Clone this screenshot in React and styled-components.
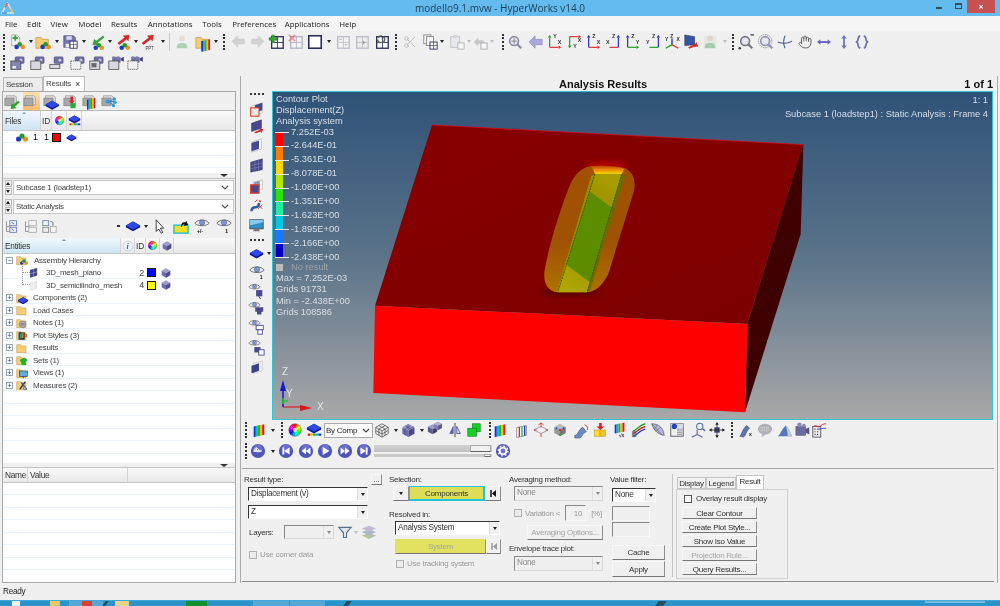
import React from 'react';
import styled, { createGlobalStyle } from 'styled-components';
import { Hand, Scissors } from 'lucide-react';

const Global = createGlobalStyle`
  html, body { margin: 0; padding: 0; background: #f0f0f0; }
  body { font-family: "Liberation Sans", Arial, sans-serif; font-size: 8px; letter-spacing: -0.25px; color: #222; }
  * { box-sizing: border-box; }
`;

const Page = styled.div`
  width: 1000px; height: 606px; overflow: hidden; display: flex; flex-direction: column;
  background: #f0f0f0; filter: blur(0.35px);
`;
const TitleBar = styled.div`
  height: 16px; background: #63bbee; display: grid; grid-template-columns: 1fr auto 1fr; align-items: center;
  font: 10px "Open Sans", sans-serif; letter-spacing: 0; color: #1f3d55;
`;
const TitleLogo = styled.svg` width: 13px; height: 13px; margin-left: 1px; `;
const WinControls = styled.div` display: flex; justify-content: flex-end; align-items: flex-start; height: 16px; padding-right: 5px; `;
const WinBtn = styled.div`
  width: ${p => p.$w}px; height: ${p => (p.$close ? 13 : 12)}px; display: flex; align-items: center; justify-content: center;
  background: ${p => (p.$close ? '#c75050' : 'transparent')}; color: ${p => (p.$close ? '#fff' : '#333')};
  font-size: 9px; font-weight: bold; margin-left: ${p => p.$ml || 0}px;
`;
const MinGlyph = styled.i` width: 6px; height: 2px; background: #3a4a58; display: block; margin-top: 4px; `;
const RestGlyph = styled.i` width: 7px; height: 6px; border: 1px solid #3a4a58; border-top-width: 2px; display: block; `;
const MenuBar = styled.div`
  height: 15px; background: #f5f5f5; display: flex; align-items: center; padding-left: 5px;
  font: 7.9px "Open Sans", sans-serif; letter-spacing: 0; color: #222;
`;
const MenuItem = styled.span` margin-right: ${p => p.$gap}px; `;
const StripBox = styled.div`
  display: flex; flex-direction: ${p => (p.$column ? 'column' : 'row')}; align-items: center; height: ${p => (p.$h ? p.$h + 'px' : 'auto')};
  flex-shrink: 0;
`;
const Slot = styled.div`
  flex: none; display: flex; align-items: center; justify-content: center;
  ${p => (p.$column ? `margin-top:${p.$off}px; height:${p.$s}px;` : `margin-left:${p.$off}px; width:${p.$s}px;`)}
`;
const GripH = styled.div` width: 2px; height: 16px; border-left: 2px dotted #333; `;
const GripV = styled.div` height: 2px; width: 14px; border-top: 2px dotted #333; `;
const SepLine = styled.div` width: 1px; height: 18px; background: #c8c8c8; `;
const DropTri = styled.div` width: 0; height: 0; border-left: 2.5px solid transparent; border-right: 2.5px solid transparent; border-top: 3px solid ${p => p.$c || '#222'}; `;
const Glyph = styled.svg` width: ${p => p.$s}px; height: ${p => p.$s}px; display: block; flex: none; overflow: visible; `;
const WithDrop = styled.div`
  position: relative; display: flex;
  &::after { content: ""; position: absolute; left: 18px; top: 6px; border-left: 2.5px solid transparent; border-right: 2.5px solid transparent; border-top: 3px solid #222; }
`;

const Main = styled.div` height: 507px; margin-top: 2px; display: flex; `;
const LeftCol = styled.div` width: 238px; padding-left: 2px; display: flex; flex-direction: column; `;
const TabRow = styled.div` height: 15px; display: flex; align-items: flex-end; padding-left: 1px; `;
const SideTab = styled.div`
  height: ${p => (p.$on ? 15 : 14)}px; width: ${p => (p.$on ? 42 : 40)}px; padding: 1px 0 0 2px; display: flex; justify-content: space-between;
  border: 1px solid #bbb; border-bottom: 0; background: ${p => (p.$on ? '#fff' : '#ececec')}; line-height: 12px;
  color: #444;
`;
const TabX = styled.span` margin-right: 4px; font-size: 9px; color: #333; `;
const SideFrame = styled.div` flex: 1; border: 1px solid #a8a8a8; display: flex; flex-direction: column; width: 234px; min-height: 0; background: #f0f0f0; `;
const IconBand = styled.div`
  height: 19px; border-bottom: 1px solid #b8b8b8;
  background: linear-gradient(#ffe0b0, #ffb870) no-repeat 20px 0 / 17px 18px;
`;
const Header = styled.div`
  height: ${p => p.$h}px; display: flex; align-items: center; flex: none; background: linear-gradient(#fafafa, #e8e8e8); border-bottom: 1px solid #c9c9c9;
  font-size: 8.3px; color: #333;
`;
const HeadCell = styled.div`
  position: relative; height: 100%; width: ${p => p.$w}px; display: flex; align-items: center; justify-content: ${p => (p.$center ? 'center' : 'flex-start')}; flex: none;
  padding-left: ${p => (p.$center ? 0 : 2)}px; border-right: 1px solid #d4d4d4;
  background: ${p => (p.$sort ? 'linear-gradient(#f0f8fd, #cde4f2)' : 'transparent')};
  ${p => p.$sort && `&::before { content: ""; position: absolute; left: 50%; top: 1px; border-left: 2px solid transparent; border-right: 2px solid transparent; border-bottom: 2px solid #7a9ab0; }`}
`;
const RuledList = styled.div`
  flex: ${p => (p.$h ? 'none' : 1)}; height: ${p => (p.$h ? p.$h + 'px' : 'auto')}; background: #fff; min-height: 0; overflow: hidden;
  background-image: repeating-linear-gradient(to bottom, transparent 0, transparent 11.5px, #e9f4fa 11.5px, #e9f4fa 12.5px);
`;
const FileRow = styled.div` height: 12.5px; display: flex; align-items: center; font-size: 9px; color: #111; `;
const Num = styled.span` width: ${p => p.$w}px; text-align: ${p => p.$a || 'left'}; flex: none; margin-left: ${p => p.$ml || 0}px; `;
const Swatch = styled.i` width: 9px; height: 9px; display: block; flex: none; border: 1px solid #111; background: ${p => p.$c}; margin: 0 ${p => p.$mr || 0}px 0 ${p => p.$ml || 0}px; `;
const Splitter = styled.div` height: ${p => p.$h}px; display: flex; justify-content: flex-end; padding: 1px 7px 0 0; background: #f0f0f0; border-bottom: 1px solid #c4c4c4; flex: none; `;
const Tri = styled.div` width: 0; height: 0; border-left: 4px solid transparent; border-right: 4px solid transparent; border-top: 3px solid #333; `;
const SelRow = styled.div` display: flex; height: 15px; margin-top: ${p => p.$mt}px; padding-left: 1px; flex: none; `;
const Spin = styled.div` width: 8px; display: flex; flex-direction: column; justify-content: space-between; align-items: center; margin-right: 1px; `;
const SpinBtn = styled.div` width: 7px; height: 7px; background: #f6f6f6; border: 1px solid #bbb; display: flex; align-items: center; justify-content: center; `;
const SpinUp = styled.i` border-left: 2.5px solid transparent; border-right: 2.5px solid transparent; border-bottom: 3px solid #111; `;
const SideSelect = styled.div` flex: 1; background: #fff; border: 1px solid #c8c8c8; margin-right: 1px; display: flex; align-items: center; justify-content: space-between; padding: 0 4px 0 2px; color: #444; `;
const Chevron = styled.svg` width: 8px; height: 5px; `;
const TreeRow = styled.div` height: 12.5px; display: flex; align-items: center; color: #444; position: relative; `;
const Expander = styled.i`
  width: 7px; height: 7px; margin-left: 3px; border: 1px solid #98a6b4; background: #fff; flex: none; display: flex; align-items: center; justify-content: center;
  font-style: normal; font-size: 7px; line-height: 5px; color: #335;
`;
const TreeLabel = styled.span` margin-left: ${p => p.$ml || 0}px; white-space: nowrap; flex: 1; `;
const TreeLink = styled.i` position: absolute; left: 19px; top: -7px; width: 8px; height: 13px; border-left: 1px dotted #999; border-bottom: 1px dotted #999; `;
const IndentBox = styled.div` width: ${p => p.$w}px; flex: none; `;
const IdCell = styled.span` width: 12px; text-align: right; flex: none; margin-right: 3px; font-size: 9px; `;

const RightCol = styled.div` width: 758px; margin-left: 2px; border-left: 1px solid #aaa; border-right: 1px solid #aaa; display: flex; flex-direction: column; `;
const RightHead = styled.div` height: 15px; display: flex; justify-content: space-between; align-items: center; padding: 0 4px 0 318px; font: bold 11px "Liberation Sans", sans-serif; letter-spacing: 0; color: #111; flex: none; `;
const ViewRow = styled.div` height: 329px; display: flex; flex: none; `;
const SideTools = styled.div` width: 31px; flex: none; `;
const Viewport = styled.div`
  position: relative; width: 721px; height: 329px; border: 1px solid #2fc7d8; flex: none;
  background: linear-gradient(#2f5278, #5a7389 50%, #a8a8a8); overflow: hidden; color: #d8dfe6; font-size: 9.3px; letter-spacing: 0; line-height: 11.2px;
`;
const Scene = styled.svg` width: 100%; height: 100%; display: block; `;
const LegendText = styled.div` position: absolute; left: 3px; top: 2px; `;
const LegendLine = styled.div` height: 11.2px; white-space: nowrap; `;
const ScaleBox = styled.div` position: absolute; left: 3px; top: 40px; width: 90px; `;
const ScaleRow = styled.div` height: 13.9px; position: relative; `;
const ScaleColor = styled.i` position: absolute; left: 0; top: 0; width: 7px; height: 13.9px; background: ${p => p.$c}; `;
const ScaleTick = styled.i` position: absolute; left: -1px; top: 0; width: 14px; height: 1px; background: #e8e8e8; `;
const ScaleLabel = styled.span` position: absolute; left: 15px; top: -5.5px; white-space: nowrap; `;
const LegendFoot = styled.div` position: absolute; left: 3px; top: 170px; `;
const NoResult = styled.div` height: 11.2px; display: flex; align-items: center; color: #9aa2a8; `;
const NoSwatch = styled.i` width: 7px; height: 7px; background: #bbb; margin: 0 8px 0 0; `;
const TopRight = styled.div` position: absolute; right: 4px; top: 1px; text-align: right; line-height: 14px; white-space: nowrap; `;

const ByComp = styled.div` width: 49px; height: 15px; background: #fff; border: 1px solid #aaa; display: flex; align-items: center; justify-content: space-between; padding: 0 2px 0 1px; white-space: nowrap; color: #222; `;
const SliderWrap = styled.div` display: flex; flex-direction: column; width: 118px; gap: 2px; `;
const SliderTop = styled.div` height: 7px; background: linear-gradient(#d4d4d4, #c0c0c0); display: flex; justify-content: flex-end; padding-right: 1px; `;
const SliderBottom = styled.div` height: 3px; background: #c9c9c9; display: flex; justify-content: flex-end; padding-right: 1px; `;
const Thumb = styled.i` width: ${p => p.$w}px; height: 100%; background: #f0f0f0; border: 1px solid #aaa; border-bottom-color: #666; display: block; `;
const ToolArea = styled.div` height: 48px; flex: none; `;
const Panel = styled.div` height: 114px; width: 752px; margin-left: 1px; border-top: 1px solid #a6a6a6; border-bottom: 1px solid #8c8c8c; display: flex; padding: 5px 0 0 2px; color: #333; flex: none; `;
const Col = styled.div` width: ${p => p.$w}px; margin-left: ${p => p.$ml || 0}px; flex: none; display: flex; flex-direction: column; align-items: flex-start; `;
const Label = styled.div`
  height: 11px; line-height: 11px; margin-top: ${p => p.$mt || 0}px; margin-left: ${p => p.$ml || 0}px; white-space: nowrap; color: ${p => (p.$off ? '#9a9a9a' : '#333')};
`;
const SpacedRow = styled.div` display: flex; width: 100%; justify-content: space-between; align-items: center; `;
const Row = styled.div` display: flex; align-items: center; margin-top: ${p => p.$mt || 0}px; margin-left: ${p => p.$ml || 0}px; `;
const Combo = styled.div`
  width: ${p => p.$w}px; height: ${p => p.$h || 14}px; margin-top: ${p => p.$mt || 0}px; margin-left: ${p => p.$ml || 0}px; display: flex; align-items: stretch; flex: none;
  background: ${p => (p.$off ? '#f0f0f0' : '#fff')}; border: 1px solid ${p => (p.$off ? '#d8d8d8' : '#fff')};
  border-top-color: ${p => (p.$off ? '#888' : '#333')}; border-left-color: ${p => (p.$off ? '#888' : '#333')};
  font-size: 8.2px; color: ${p => (p.$off ? '#888' : '#333')};
`;
const ComboText = styled.span` flex: 1; padding-left: 2px; line-height: 12px; white-space: nowrap; overflow: hidden; `;
const ComboArrow = styled.span` width: 10px; flex: none; display: flex; align-items: center; justify-content: center; background: #f0f0f0; border-left: 1px solid #ddd; `;
const RaisedBtn = styled.div`
  width: ${p => p.$w}px; height: ${p => p.$h}px; margin-top: ${p => p.$mt || 0}px; margin-left: ${p => p.$ml || 0}px; flex: none; display: flex; align-items: center; justify-content: center;
  background: ${p => p.$bg || '#f0f0f0'}; border: 1px solid ${p => p.$bg ? p.$bg : '#f8f8f8'}; border-right-color: #8e8e8e; border-bottom-color: #777;
  ${p => p.$hot && 'border: 1px solid #23c4d6; border-bottom-width: 2px; border-right-width: 2px;'}
  color: ${p => (p.$off ? '#a4a4a4' : '#333')}; white-space: nowrap;
`;
const Check = styled.i` width: 8px; height: 8px; display: block; flex: none; border: 1px solid ${p => (p.$on ? '#555' : '#b0b0b0')}; background: ${p => (p.$on ? '#fff' : '#ececec')}; margin-right: ${p => p.$mr || 3}px; margin-left: ${p => p.$ml || 0}px; `;
const Sunken = styled.div`
  width: ${p => p.$w}px; height: ${p => p.$h}px; margin-top: ${p => p.$mt || 0}px; margin-left: ${p => p.$ml || 0}px; flex: none; display: flex; align-items: center; justify-content: flex-end; padding-right: 3px;
  border: 1px solid #f8f8f8; border-top-color: #888; border-left-color: #888; color: #999;
`;
const ToEnd = styled.div` width: 6px; height: 6px; display: flex; align-items: center; `;
const VRule = styled.div` width: 1px; height: 103px; background: #c4c4c4; margin-left: 6px; flex: none; `;
const TabStrip = styled.div` display: flex; align-items: flex-end; height: 14px; padding-left: 1px; margin-top: 1px; `;
const PanelTab = styled.div`
  width: ${p => p.$w}px; height: ${p => (p.$on ? 14 : 12)}px; text-align: center; line-height: 11px; background: ${p => (p.$on ? '#fff' : '#f0f0f0')};
  border: 1px solid #c4c4c4; border-bottom: ${p => (p.$on ? 0 : '1px solid #c4c4c4')}; color: #333;
`;
const TabBody = styled.div` width: 112px; height: 90px; border: 1px solid #cfcfcf; padding: 3px 0 0 5px; `;
const Status = styled.div` height: 17px; padding-left: 3px; display: flex; align-items: center; font-size: 8.2px; color: #222; background: #f0f0f0; flex: none; `;
const Taskbar = styled.div` height: 6px; flex: none; display: flex; background: #2a93c8; border-top: 1px solid #3ea8dd; overflow: hidden; `;
const TaskBlock = styled.i` display: block; width: ${p => p.$w}px; height: 100%; margin-left: ${p => p.$ml || 0}px; background: ${p => p.$c}; flex: none; transform: ${p => (p.$skew ? 'skewX(-35deg)' : 'none')}; `;
const TaskNotes = styled.i` display: block; width: 60px; height: 2px; margin-left: auto; margin-right: 15px; background: rgba(255,255,255,.35); flex: none; `;

/* --- icon drawing parts --- */
const sectors = Array.from({ length: 16 }, (_, i) => {
  const a0 = (i / 16) * 2 * Math.PI - Math.PI / 2, a1 = ((i + 1.1) / 16) * 2 * Math.PI - Math.PI / 2;
  return { d: `M9 9L${9 + 7 * Math.cos(a0)} ${9 + 7 * Math.sin(a0)}L${9 + 7 * Math.cos(a1)} ${9 + 7 * Math.sin(a1)}Z`, c: `hsl(${(i / 16) * 360 + 15},100%,50%)` };
});
const Wheel = () => <>{sectors.map(s => <path key={s.d} d={s.d} fill={s.c} />)}<circle cx="9" cy="9" r="2.2" fill="#fff" opacity=".7" /><circle cx="9" cy="9" r="7" fill="none" stroke="#333" strokeWidth=".5" /></>;
const Model = ({ x = 0, y = 0, k = 1 }) => <g transform={`translate(${x} ${y}) scale(${k})`}><circle cx="2.6" cy="5.5" r="2.6" fill="#2438c8" /><circle cx="9.4" cy="5.5" r="2.6" fill="#e8921c" /><circle cx="6" cy="2.6" r="2.6" fill="#1f9a2e" /></g>;
const Plate = ({ x = 0, y = 0, k = 1 }) => <g transform={`translate(${x} ${y}) scale(${k})`}><path d="M9 4l8 4.5v2L9 15 1 10.500V8.500z" fill="#10108a" /><path d="M9 4l8 4.500-8 4.500-8-4.500z" fill="#2e48e6" /></g>;
const Folder = ({ c = '#f4cd74', s = '#b58e3c' }) => <path d="M1 4h6l1.500 2H15v10H1z" fill={c} stroke={s} strokeWidth=".7" />;
const GrayFolder = () => <><path d="M3 2h10l2 2v9H3z" fill="#d8d8d8" stroke="#8e8e8e" strokeWidth=".7" /><path d="M1 5h11v9H1z" fill="#a8a8a8" stroke="#777" strokeWidth=".7" /></>;
const Rainbow = ({ x = 0, y = 0, w = 2, h = 12 }) => <g transform={`translate(${x} ${y}) skewY(-12)`}>{['#e01818', '#f0c000', '#18c018', '#10b8d8', '#1830e0'].reverse().map((c, i) => <rect key={c} x={i * w} y="0" width={w} height={h} fill={c} />)}</g>;
const Cube = ({ x = 0, y = 0, k = 1, t = '#9c9ad0', l = '#6e6cac', r = '#4e4c8e' }) => <g transform={`translate(${x} ${y}) scale(${k})`}><path d="M9 2l6.500 3.500L9 9 2.500 5.500z" fill={t} /><path d="M2.500 5.500L9 9v7l-6.500-3.500z" fill={l} /><path d="M15.500 5.500L9 9v7l6.500-3.500z" fill={r} /></g>;
const Eye = ({ x = 0, y = 0, k = 1 }) => <g transform={`translate(${x} ${y}) scale(${k})`}><path d="M1 7c3-5 13-5 16 0-3 3.500-13 3.500-16 0z" fill="#eef0f4" stroke="#666" strokeWidth="1" /><circle cx="9" cy="6.200" r="3" fill="#7a96d8" stroke="#445" strokeWidth=".5" /></g>;
const Pane = ({ o = 1, c = '#2b2f58', f = '#fff' }) => <g opacity={o}><rect x="3" y="3" width="13" height="13" fill={f} stroke={c} strokeWidth="1.500" /><path d="M9.500 3v13M3 9.500h13" stroke={c} strokeWidth="1" /></g>;
const Arrow = ({ c, d = 'M2 12L12 5l-2-2 7-1-1 7-2-2L5 15z' }) => <path d={d} fill={c} stroke="#0006" strokeWidth=".4" />;
const Person = () => <g opacity=".45"><circle cx="9" cy="5" r="3.300" fill="#e0c4a8" /><path d="M3 16c0-5 2-6 6-6s6 1 6 6z" fill="#58b068" /></g>;
const Axis = ({ o, h, v, hc, vc, hl, vl, hp, vp }) => (
  <>
    <path d={`M${o[0]} ${o[1]}H${h}`} stroke={hc} strokeWidth="1.300" /><path d={`M${h} ${o[1] - 2}l${h > o[0] ? 3 : -3} 2-${h > o[0] ? 3 : -3} 2z`} fill={hc} />
    <path d={`M${o[0]} ${o[1]}V${v}`} stroke={vc} strokeWidth="1.300" /><path d={`M${o[0] - 2} ${v}l2 ${v < o[1] ? -3 : 3} 2 ${v < o[1] ? 3 : -3}z`} fill={vc} />
    <text x={hp[0]} y={hp[1]} fontSize="6" fontWeight="bold" fill="#333" fontFamily="Liberation Sans">{hl}</text>
    <text x={vp[0]} y={vp[1]} fontSize="6" fontWeight="bold" fill="#333" fontFamily="Liberation Sans">{vl}</text>
  </>
);
const Mag = ({ c = '#8f8fc4' }) => <><circle cx="8" cy="8" r="5" fill="#e6e6f4" stroke={c} strokeWidth="1.800" /><path d="M11.500 11.500L16 16" stroke={c} strokeWidth="2.400" /></>;
const Cam = ({ fill = '#d8d8e2', dash, small, low, film }) => (
  <>
    {!film && <><rect x="6" y="1" width="11" height="8" rx="1.500" fill="#6f6fa6" stroke="#44447a" strokeWidth=".5" /><circle cx="13" cy="5" r="2.300" fill="#c8c8e0" stroke="#44447a" strokeWidth=".5" /></>}
    {film && <><rect x="5" y="1" width="10" height="7" fill="#6f6fa6" /><path d="M15 3l4-2v6l-4-2z" fill="#44447a" /><circle cx="7" cy="2" r="1.800" fill="#7f7fb4" /><circle cx="12" cy="2" r="1.800" fill="#7f7fb4" /></>}
    <rect x="1" y={low ? 10 : 6} width="12" height={low ? 5 : 10} fill={fill} stroke="#444" strokeWidth=".9" strokeDasharray={dash ? '1.500 1' : 'none'} />
    {small && <rect x="3" y="8.500" width="6" height="5" fill="#666" />}
  </>
);
const Disc = ({ children }) => <><circle cx="9" cy="9" r="8" fill="#4f55b4" /><circle cx="9" cy="6.500" r="5" fill="#7d84d8" opacity=".6" />{children}</>;
const W = '#fff';

const ICONS = {
  newModel: <><path d="M3 1h6l3 3v9H3z" fill="#f2f5f8" stroke="#8b8b8b" strokeWidth=".7" /><path d="M6 1.500h2v2h2v2H8v2H6v-2H4v-2h2z" fill="#3aa63a" /><Model x={6} y={9} /></>,
  openModel: <><Folder /><Model x={6} y={9} /></>,
  saveWin: <><path d="M2 2h11l2 2v11H2z" fill="#7474b2" stroke="#3e3e78" strokeWidth=".7" /><rect x="5" y="2.500" width="6" height="4" fill="#d8d8e6" /><rect x="9" y="8" width="8" height="8" fill="#fff" stroke="#2b2f58" /><path d="M13 8v8M9 12h8" stroke="#2b2f58" strokeWidth=".7" /><rect x="4" y="11" width="4" height="4" fill="#eee" /></>,
  greenModel: <><Arrow c="#30a830" d="M16 2L8 8 6 6 4 12l7 0-2-2 8-6z" /><Model x={5} y={10} /></>,
  redModel: <><Arrow c="#e02424" d="M3 10l8-6-2-2 7-1-1 7-2-2-8 6z" /><Model x={5} y={10} /></>,
  redPpt: <><Arrow c="#e02424" d="M1 10l8-6-2-2 7-1-1 7-2-2-8 6z" /><text x="5" y="17.500" fontSize="5" fill="#444" fontFamily="Liberation Sans">PPT</text></>,
  person: <Person />,
  folderBars: <><Folder /><Rainbow x={7} y={8} /></>,
  leftGray: <path d="M1 9l7-7v4h8v6H8v4z" fill="#d2d2d2" stroke="#c4c4c4" strokeWidth=".5" />,
  rightGray: <path d="M17 9l-7-7v4H2v6h8v4z" fill="#d2d2d2" stroke="#c4c4c4" strokeWidth=".5" />,
  leftLav: <path d="M1 9l7-7v4h8v6H8v4z" fill="#a8a8dc" stroke="#8080b8" strokeWidth=".6" />,
  paneAdd: <><Pane /><path d="M3 1h3v3h3v3H6v3H3V7H0V4h3z" fill="#33a833" stroke="#1a701a" strokeWidth=".4" /></>,
  paneDel: <><Pane o={.3} /><path d="M1 1l7 7M8 1L1 8" stroke="#e46060" strokeWidth="2" opacity=".6" /></>,
  paneSquare: <rect x="2" y="2" width="14" height="14" fill="#fff" stroke="#2b2f58" strokeWidth="1.800" />,
  paneFadeA: <><Pane o={.25} /><path d="M5 6h3M11 12h3" stroke="#444" opacity=".4" /></>,
  paneFadeB: <><Pane o={.25} f="#e8e8e8" /><path d="M10 7l3 2.500-3 2.500z" fill="#666" opacity=".5" /></>,
  paneCycle: <><Pane /><circle cx="8" cy="6" r="4" fill="none" stroke="#666" strokeWidth="1.800" strokeDasharray="5 2" /></>,
  scissors: <g opacity=".45"><Scissors x={1} y={1} size={16} strokeWidth={1.500} color="#777" /></g>,
  copy: <><rect x="2" y="1" width="8" height="10" fill="#f4f4f4" stroke="#888" /><rect x="5" y="3" width="8" height="10" fill="#f4f4f4" stroke="#888" /><rect x="9" y="9" width="8" height="8" fill="#fff" stroke="#2b2f58" /><path d="M13 9v8M9 13h8" stroke="#2b2f58" strokeWidth=".7" /></>,
  paste: <g opacity=".4"><rect x="2" y="3" width="10" height="12" fill="#dde" stroke="#778" /><rect x="5" y="1" width="4" height="3" fill="#aaa" /><rect x="10" y="10" width="7" height="7" fill="#fff" stroke="#556" /></g>,
  pasteB: <g opacity=".45"><path d="M2 9l5-5v3h6v4H7v3z" fill="#999" /><rect x="10" y="10" width="7" height="7" fill="#fff" stroke="#556" /></g>,
  zoomBox: <><Mag c="#8a8a9e" /><path d="M5 8h6M8 5v6" stroke="#666" strokeWidth=".8" /></>,
  axYX: <Axis o={[3, 15]} h={13} v={4} hc="#e03030" vc="#18a018" hl="X" vl="Y" hp={[12, 11]} vp={[7, 5]} />,
  axYXdown: <Axis o={[3, 3]} h={13} v={13} hc="#e03030" vc="#18a018" hl="X" vl="Y" hp={[12, 9]} vp={[7, 16]} />,
  axZX: <Axis o={[3, 15]} h={13} v={4} hc="#e03030" vc="#2020d8" hl="X" vl="Z" hp={[12, 11]} vp={[7, 5]} />,
  axZXl: <Axis o={[15, 15]} h={5} v={4} hc="#e03030" vc="#2020d8" hl="X" vl="Z" hp={[1, 11]} vp={[8, 5]} />,
  axZY: <Axis o={[3, 15]} h={13} v={4} hc="#18a018" vc="#2020d8" hl="Y" vl="Z" hp={[12, 11]} vp={[7, 5]} />,
  axZYl: <Axis o={[15, 15]} h={5} v={4} hc="#18a018" vc="#2020d8" hl="Y" vl="Z" hp={[1, 11]} vp={[8, 5]} />,
  axIso: <><path d="M9 12V5" stroke="#2020d8" strokeWidth="1.500" /><path d="M9 12l7 4" stroke="#e03030" strokeWidth="1.500" /><path d="M9 12l-7 4" stroke="#18a018" strokeWidth="1.500" /><text x="1" y="8" fontSize="5.500" fontWeight="bold" fill="#333" fontFamily="Liberation Sans">Y</text><text x="7" y="4" fontSize="5.500" fontWeight="bold" fill="#333" fontFamily="Liberation Sans">Z</text><text x="14" y="8" fontSize="5.500" fontWeight="bold" fill="#333" fontFamily="Liberation Sans">X</text></>,
  monitorRed: <><path d="M2 1l11 2v9L2 13z" fill="#2f57a8" stroke="#223" strokeWidth=".6" /><path d="M6 15l8-4 1-2 2 5-5 1 2-1.500-7 3z" fill="#e02020" /></>,
  personGhost: <><rect x="2" y="2" width="14" height="14" fill="#ddd" opacity=".6" /><Person /></>,
  zoomMinus: <><Mag c="#75757f" /><path d="M14 1h4" stroke="#333" strokeWidth="1.300" /><circle cx="2" cy="16" r="1.500" fill="#444" /></>,
  zoomFit: <><Mag c="#8f8fb8" /><circle cx="8" cy="8" r="7.500" fill="none" stroke="#888" strokeDasharray="1.500 1" /></>,
  rotate: <><path d="M9 2c-2 5-2 10 0 14" stroke="#4a5a80" fill="none" strokeWidth="1.200" /><path d="M1 9c5 2 11 2 16-1" stroke="#4a5a80" fill="none" strokeWidth="1.200" /></>,
  hand: <Hand x={1} y={1} size={16} strokeWidth={1.500} color="#555" />,
  hArrows: <path d="M1 9l4-3v2h8V6l4 3-4 3v-2H5v2z" fill="#6a6ac4" />,
  vArrows: <path d="M9 1l3 4h-2v8h2l-3 4-3-4h2V5H6z" fill="#7272c8" />,
  braces: <path d="M7 2C3 3 6 7 3 9c3 2 0 6 4 7M11 2c4 1 1 5 4 7-3 2 0 6-4 7" fill="none" stroke="#7070b8" strokeWidth="2" />,
  camSave: <><Cam fill="#8484b8" /><rect x="3" y="12" width="4" height="3" fill="#eee" /></>,
  camWin: <Cam />,
  camLow: <Cam low />,
  camDash: <Cam dash fill="#f0f0f0" />,
  camBlack: <Cam small />,
  filmWin: <Cam film />,
  filmDash: <Cam film dash fill="#f0f0f0" />,
  fArrow: <><GrayFolder /><path d="M17 8l-6 5-2-2-1 7 7-1-2-2 6-5z" fill="#2aa82a" /></>,
  fPlain: <GrayFolder />,
  fPlate: <><GrayFolder /><Plate x={2} y={4} /></>,
  fDrop: <><GrayFolder /><path d="M9 3h3v5h2l-3.500 4L7 8h2z" fill="#e02020" /><rect x="9" y="11" width="6" height="6" fill="#20b030" /></>,
  fBars: <><GrayFolder /><Rainbow x={6} y={7} /></>,
  fNet: <><GrayFolder /><path d="M8 9l8-3M8 9l8 0M8 9l7 4" stroke="#2878c8" /><circle cx="8" cy="9" r="2.500" fill="#2f9ce0" /><circle cx="16" cy="6" r="2" fill="#2f9ce0" /><circle cx="17" cy="10" r="2" fill="#2f9ce0" /><circle cx="15" cy="14" r="2" fill="#2f9ce0" /></>,
  tree1: <><path d="M3 3v12h5M3 9h5" stroke="#8a8a8a" fill="none" /><rect x="7" y="2" width="8" height="6" fill="#eef2fa" stroke="#6a7ab0" /><rect x="7" y="10" width="8" height="6" fill="#eef2fa" stroke="#6a7ab0" /><path d="M9 4l3 2M9 12l3 2" stroke="#2a5fd0" /></>,
  tree2: <><path d="M3 3v12h5M3 9h5" stroke="#8a8a8a" fill="none" /><rect x="7" y="2" width="9" height="6" fill="#f4f4f4" stroke="#aaa" /><rect x="7" y="10" width="9" height="6" fill="#f4f4f4" stroke="#aaa" /></>,
  tree3: <><rect x="1" y="2" width="7" height="6" fill="#eef2fa" stroke="#6a7ab0" /><rect x="10" y="9" width="7" height="7" fill="#f4f4f4" stroke="#aaa" /><rect x="1" y="10" width="7" height="6" fill="#eee" stroke="#888" /><path d="M10 3c3 0 4 2 3 5" stroke="#555" fill="none" /></>,
  plate: <Plate />,
  cursor: <path d="M5 1v14l3-3 3 5 2-1-3-5h4z" fill="#fff" stroke="#222" strokeWidth="1" />,
  yellowBox: <><rect x="1" y="8" width="16" height="9" fill="#f0e020" stroke="#18c0d8" strokeWidth="1.500" /><path d="M9 10c0-4 2-6 5-5l1-2 2 5-5 1 1-2c-2 0-3 1-3 3z" fill="#111" /></>,
  eyePm: <><Eye x={0} y={-1} /><text x="3" y="17" fontSize="6.500" fontWeight="bold" fill="#222" fontFamily="Liberation Sans">+/-</text></>,
  eyeOne: <><Eye x={0} y={-1} /><text x="10" y="17" fontSize="6.500" fontWeight="bold" fill="#222" fontFamily="Liberation Sans">1</text></>,
  wheel: <Wheel />,
  plateBar: <><Plate y={-2} /><g transform="translate(2 13)">{['#e02020', '#f0c000', '#18c018', '#10b8d8', '#1830e0'].map((c, i) => <rect key={c} x={i * 3} y="0" width="3" height="2.500" fill={c} />)}</g></>,
  cube: <Cube />,
  info: <><circle cx="9" cy="9" r="7.500" fill="#eef3fa" stroke="#b8c4d8" /><text x="6.800" y="14" fontSize="12" fontWeight="bold" fontStyle="italic" fill="#3a5cc8" fontFamily="Liberation Serif">i</text></>,
  meshDark: <><path d="M2 5l11-3v12L2 17z" fill="#40408a" stroke="#223" strokeWidth=".5" /><path d="M7.500 3.500v12M2 11l11-3" stroke="#dde" strokeWidth=".7" /></>,
  meshLight: <><path d="M2 5l11-3v12L2 17z" fill="#e8e8e8" stroke="#cfcfcf" strokeWidth=".5" /><path d="M7.500 3.500v12M2 11l11-3" stroke="#fff" strokeWidth=".7" /></>,
  folderPlate: <><Folder /><Plate x={2} y={4} k={.95} /></>,
  folder: <Folder />,
  folderNotes: <><Folder /><circle cx="10" cy="11" r="5" fill="#b0b0b0" stroke="#777" /><path d="M7 10h6M7 12h6" stroke="#666" /></>,
  folderStyle: <><Folder /><rect x="4" y="5" width="9" height="11" fill="#222" /><Rainbow x={4.500} y={7} w={1.700} h={8} /><path d="M14 8l3 1-3 2 3 1" stroke="#444" fill="none" /></>,
  folderSets: <><Folder /><path d="M6 9l6-3 5 3-3 3 1 4-6 0-1-4z" fill="#16b828" stroke="#0a7016" strokeWidth=".5" /></>,
  folderViews: <><Folder /><rect x="5" y="6" width="12" height="8" fill="#5cb0e0" stroke="#335" /><path d="M11 14v3" stroke="#335" /></>,
  folderMeasures: <><Folder /><path d="M6 15l8-11" stroke="#333" strokeWidth="2" /><path d="M8 5l8 11" stroke="#3058b8" strokeWidth="2" /><circle cx="13" cy="14" r="2" fill="#ccc" stroke="#555" /></>,
  vPaneRed: <><path d="M3 5l13-4v12L3 17z" fill="#fff" stroke="#bbb" /><path d="M7 4l9-3v9l-9 3z" fill="#484890" /><rect x="2" y="7" width="10" height="10" fill="#f6e8e4" stroke="#e03020" strokeWidth="1.200" /></>,
  vPaneArrow: <><path d="M3 5l12-4v10L3 15z" fill="#484890" stroke="#223" strokeWidth=".5" /><path d="M6 16l7-3-1-2 5 1-2 5-1-2-6 2z" fill="#e02020" /></>,
  vPane: <><path d="M3 5l12-4v12L3 17z" fill="#fff" stroke="#bbb" /><path d="M3 6l9-3v10l-9 3z" fill="#484890" /></>,
  vPaneDense: <><path d="M2 5l14-4v13L2 17z" fill="#484890" stroke="#223" strokeWidth=".5" /><path d="M7 3.500v13M11.500 2.500v13M2 9l14-3M2 13l14-3" stroke="#9a9ad0" strokeWidth=".5" /></>,
  vPaneOrange: <><path d="M5 4l11-3v11L5 15z" fill="#fff" stroke="#bbb" /><path d="M6 4l7-2v9l-7 2z" fill="#9090c0" /><rect x="2" y="7" width="10" height="10" fill="#484890" stroke="#e04020" strokeWidth="1.500" /></>,
  vCurve: <><path d="M3 16c0-4 2-5 5-5s4-2 4-5" fill="none" stroke="#2a5faa" strokeWidth="3" /><path d="M7 5l3-3M11 8l5 5M16 8l-5 5" stroke="#e02020" /><circle cx="13" cy="4" r="1.200" fill="#e02020" /></>,
  monitor: <><rect x="1" y="2" width="16" height="11" fill="#2e8ec8" stroke="#444" /><path d="M1 2h16v3L1 9z" fill="#88c8ee" /><path d="M5 16h8l-1-3H6z" fill="#777" /></>,
  vEyeOne: <><Eye x={0} y={0} /><text x="12" y="17" fontSize="6" fontWeight="bold" fill="#222" fontFamily="Liberation Sans">1</text></>,
  vEyeCube: <><Eye x={-1} y={-1} k={.8} /><rect x="8" y="8" width="7" height="7" fill="#4a4a90" /><path d="M11 15l2 3" stroke="#222" /></>,
  vEyeTee: <><Eye x={-1} y={-2} k={.8} /><path d="M7 6h9v5h-2v3h-5v-3H7z" fill="#4a4a90" /></>,
  vEyeTeeO: <><Eye x={-1} y={-2} k={.8} /><rect x="8" y="6" width="8" height="5" fill="#fff" stroke="#4a4a90" /><rect x="10" y="11" width="5" height="5" fill="#fff" stroke="#4a4a90" /></>,
  vEyeTwo: <><Eye x={-1} y={-2} k={.8} /><rect x="6" y="8" width="7" height="6" fill="#4a4a90" /><rect x="11" y="11" width="6" height="6" fill="#fff" stroke="#4a4a90" /></>,
  vMesh: <><path d="M5 4l11-3v12L5 16z" fill="#eee" stroke="#ccc" /><path d="M3 7l9-3v9l-9 3z" fill="#404088" /></>,
  bars: <Rainbow x={3} y={5} w={2.400} />,
  meshCube: <g fill="none" stroke="#444" strokeWidth=".8"><path d="M9 2l7 4v7l-7 4-7-4V6z" /><path d="M2 6l7 4 7-4M9 10v7M5.500 4l7 4v7M12.500 4l-7 4v7M2 9.500l7 4 7-4" /></g>,
  solidCube: <><Cube k={1.050} /><path d="M9 2.500v6l6.500-3.500M5.500 4l7 4v7M12.500 4l-7 4v7" stroke="#2f2d60" strokeWidth=".5" fill="none" /></>,
  twoCubes: <><Cube x={-1} y={1} k={.8} l="#5a5a90" r="#404070" /><Cube x={6} y={-2} k={.7} t="#b0b0d0" l="#8080a8" r="#5a5a88" /></>,
  mirror: <><path d="M9 1v16" stroke="#333" /><path d="M7 5L3 13h4z" fill="#5060d0" stroke="#223" strokeWidth=".4" /><path d="M11 5l4 8h-4z" fill="#eef" stroke="#2a3ab0" strokeWidth=".9" /></>,
  greens: <><rect x="7" y="2" width="9" height="9" fill="#16d028" stroke="#0a7016" strokeWidth=".6" /><rect x="2" y="7" width="10" height="9" fill="#16d028" stroke="#0a7016" strokeWidth=".6" /></>,
  barsOutline: <g transform="skewY(-12)"><rect x="3" y="7" width="11" height="11" fill="#fff" stroke="#666" strokeWidth=".7" /><path d="M6 7v11" stroke="#e02020" strokeWidth="1.500" /><path d="M9 7v11" stroke="#20b030" strokeWidth="1.500" /><path d="M12 7v11" stroke="#2030d0" strokeWidth="1.500" /></g>,
  diamond: <><path d="M9 5l8 4-8 4-8-4z" fill="#f0f0f8" stroke="#555" strokeWidth=".6" /><path d="M9 1v5M6 3.500L9 1l3 2.500M9 17v-4M1 9h3M14 9h3" stroke="#e02020" strokeWidth=".9" fill="none" /></>,
  cubeWire: <><Cube t="#bbb" l="#999" r="#777" /><circle cx="9" cy="9" r="1.300" fill="#e02020" /><circle cx="5" cy="7" r="1.200" fill="#2050e0" /><circle cx="13" cy="7" r="1.200" fill="#2050e0" /><circle cx="9" cy="14" r="1.200" fill="#18b018" /></>,
  curved: <><path d="M2 15c4 0 4-7 9-9l4 5c-4 1-5 6-7 7H2z" fill="#6a8ac8" stroke="#445" strokeWidth=".6" /><path d="M13 3c3 1 4 4 3 6" stroke="#e02020" fill="none" /></>,
  dropCube: <><path d="M8 1h3v4h3l-4.500 4L5 5h3z" fill="#e02020" /><rect x="3" y="9" width="6" height="7" fill="#ffdc30" stroke="#b09020" strokeWidth=".6" /><rect x="9" y="9" width="6" height="7" fill="#ffc020" stroke="#b09020" strokeWidth=".6" /></>,
  barsVx: <><Rainbow x={3} y={3} w={2.200} h={10} /><text x="8" y="17" fontSize="5.500" fontWeight="bold" fill="#333" fontFamily="Liberation Sans">√x</text></>,
  ribbons: <><path d="M2 13c4 0 6-6 14-8" stroke="#e02020" fill="none" strokeWidth="1.600" /><path d="M2 10c4 0 6-6 14-8" stroke="#20a030" fill="none" strokeWidth="1.600" /><path d="M2 16c4 0 6-6 14-8" stroke="#2040d0" fill="none" strokeWidth="1.600" /><rect x="1" y="10" width="5" height="7" fill="#556" opacity=".6" /></>,
  dish: <><path d="M2 2c8 0 13 5 14 13-7-1-12-6-14-13z" fill="#b8b8d8" stroke="#445" strokeWidth=".7" /><path d="M2 2l12 13M8 3L5 9M12 6l-6 5" stroke="#556" strokeWidth=".6" /></>,
  infoDoc: <><rect x="2" y="2" width="14" height="14" fill="#f0f0f0" stroke="#556" /><path d="M2 2h14v4H2z" fill="#d8d8e8" /><circle cx="6" cy="5" r="3" fill="#2040c8" /><path d="M9 8h6M9 10h6M9 12h6M9 14h6" stroke="#888" /></>,
  triadMag: <><path d="M8 9v5M8 14l-6 3M8 14l6 3" stroke="#7070b0" strokeWidth="1.400" /><circle cx="11" cy="5" r="3.500" fill="#e6f0fa" stroke="#5570a0" strokeWidth="1.200" /><path d="M14 7.500L17 10" stroke="#5570a0" strokeWidth="1.600" /></>,
  crossMove: <><rect x="6" y="6" width="6" height="6" fill="#3c3c70" /><path d="M9 1v16M1 9h16" stroke="#333" /><path d="M9 0l2 3H7zM9 18l2-3H7zM0 9l3-2v4zM18 9l-3-2v4z" fill="#222" /></>,
  curveX: <><path d="M2 16c2-1 3-9 8-12l3 3c-4 3-4 9-7 10z" fill="#5a78b8" stroke="#334" strokeWidth=".5" /><text x="12" y="16" fontSize="6.500" fontWeight="bold" fill="#333" fontFamily="Liberation Sans">x</text></>,
  speech: <><ellipse cx="9" cy="8" rx="8" ry="6" fill="#aeb0b6" /><path d="M6 13l-1 4 5-3z" fill="#aeb0b6" /><path d="M4 6h10M4 8h10M4 10h10" stroke="#eee" strokeWidth=".8" strokeDasharray="1 1" /></>,
  mountain: <><path d="M1 16c3-2 4-8 9-12 3 3 5 8 7 12z" fill="#5a78b8" /><path d="M10 4c3 3 5 8 7 12h-5c0-4-1-8-2-12z" fill="#c0cce0" /></>,
  camGray: <><rect x="1" y="5" width="11" height="10" fill="#6a6a9e" stroke="#445" strokeWidth=".5" /><path d="M12 8l4-2v8l-4-2z" fill="#55558a" /><circle cx="5" cy="3" r="2.500" fill="#8a8ab8" /><circle cx="10" cy="4" r="2" fill="#8a8ab8" /></>,
  chartCalc: <><rect x="2" y="5" width="9" height="12" fill="#e8e8e8" stroke="#556" /><path d="M4 8h1M7 8h1M4 11h1M7 11h1M4 14h1M7 14h1" stroke="#333" strokeWidth="1.300" /><path d="M3 5c3-3 5 2 7 0s4-3 7-3" stroke="#e02030" fill="none" /><path d="M8 8c3 0 4-1 9-1" stroke="#2040d0" fill="none" /></>,
  discUp: <Disc><path d="M4 9h9M7 6V9" stroke={W} strokeWidth="1.800" fill="none" /><path d="M7 5l-3 3M7 5l3 3" stroke={W} /></Disc>,
  discFirst: <Disc><rect x="5" y="5" width="2" height="8" fill={W} /><path d="M13 5v8L7 9z" fill={W} /></Disc>,
  discPrev: <Disc><path d="M9 5v8L4 9zM14 5v8L9 9z" fill={W} /></Disc>,
  discPlay: <Disc><path d="M6.500 4.500v9L14 9z" fill={W} /></Disc>,
  discNext: <Disc><path d="M4 5v8l5-4zM9 5v8l5-4z" fill={W} /></Disc>,
  discLast: <Disc><rect x="11" y="5" width="2" height="8" fill={W} /><path d="M5 5v8l6-4z" fill={W} /></Disc>,
  discGear: <Disc><circle cx="9" cy="9" r="3.800" fill="none" stroke={W} strokeWidth="2.200" /><circle cx="9" cy="9" r="5.500" fill="none" stroke={W} strokeWidth="1.400" strokeDasharray="1.800 2.500" /></Disc>,
};

const Icon = ({ k, s = 16 }) => <Glyph $s={s} viewBox="0 0 18 18">{ICONS[k]}</Glyph>;

const SIZES = { grip: 2, drop: 5, fade: 5, gripV: 14, sep: 1 };
function Strip({ items, origin = 0, column, h, size: dflt = 16 }) {
  let edge = origin;
  return (
    <StripBox $column={column} $h={h}>
      {items.map((it, i) => {
        const [kind, c, size, node] = it;
        const s = size ?? SIZES[kind] ?? dflt;
        const off = Math.round(c - s / 2 - edge);
        edge += off + s;
        let body;
        if (node) body = node;
        else if (kind === 'grip') body = <GripH />;
        else if (kind === 'gripV') body = <GripV />;
        else if (kind === 'drop') body = <DropTri />;
        else if (kind === 'fade') body = <DropTri $c="#bbb" />;
        else if (kind === 'sep') body = <SepLine />;
        else body = <Icon k={kind} s={s} />;
        return <Slot key={i} $column={column} $off={off} $s={s}>{body}</Slot>;
      })}
    </StripBox>
  );
}

const TB1 = [
  ['grip', 4], ['newModel', 17], ['drop', 30], ['openModel', 43], ['drop', 56], ['saveWin', 70], ['drop', 83], ['greenModel', 97], ['drop', 109], ['redModel', 123], ['drop', 135], ['redPpt', 149], ['drop', 162], ['sep', 169],
  ['person', 182], ['folderBars', 203], ['drop', 215], ['grip', 224], ['leftGray', 238, 15], ['rightGray', 257, 15], ['paneAdd', 277], ['paneDel', 296], ['paneSquare', 315], ['drop', 328], ['paneFadeA', 343], ['paneFadeB', 362], ['paneCycle', 382], ['grip', 396],
  ['scissors', 410], ['copy', 430], ['drop', 441], ['paste', 457], ['fade', 468], ['pasteB', 480], ['fade', 491], ['grip', 503], ['zoomBox', 515], ['leftLav', 536],
  ['axYX', 555], ['axYXdown', 575], ['axZX', 594], ['axZXl', 613], ['axZY', 633], ['axZYl', 653], ['axIso', 672], ['monitorRed', 691], ['personGhost', 710], ['fade', 724], ['grip', 733],
  ['zoomMinus', 746], ['zoomFit', 766], ['rotate', 785], ['hand', 805], ['hArrows', 824], ['vArrows', 844], ['braces', 862],
];
const TB2 = [['grip', 4], ['camSave', 17], ['camWin', 37], ['camLow', 56], ['camDash', 77], ['camBlack', 96], ['filmWin', 115], ['filmDash', 134]];
const TOP_ICONS = [['fArrow', 8], ['fPlain', 27], ['fPlate', 47], ['fDrop', 67], ['fBars', 86], ['fNet', 105]];
const MID_ICONS = [['tree1', 8, 15], ['tree2', 27, 15], ['tree3', 46, 15], ['gripV', 114, 1], ['plate', 130], ['drop', 142], ['cursor', 156, 15], ['yellowBox', 178], ['eyePm', 199], ['eyeOne', 221]];
const VTOOLS = [
  ['gripV', 3], ['vPaneRed', 18, 15], ['vPaneArrow', 35, 15], ['vPane', 54, 15], ['vPaneDense', 74, 15], ['vPaneOrange', 95, 15], ['vCurve', 114, 15], ['monitor', 134, 15], ['gripV', 149],
  ['plateDrop', 162, 13, <WithDrop><Icon k="plate" s={15} /></WithDrop>],
  ['vEyeOne', 181, 16], ['vEyeCube', 200, 16], ['vEyeTee', 219, 16], ['vEyeTeeO', 237, 16], ['vEyeTwo', 257, 16], ['vMesh', 276, 15],
];
const BT1 = [
  ['grip', 6], ['bars', 19], ['drop', 32], ['grip', 42], ['wheel', 55], ['plateBar', 74], ['combo', 108.5, 49, <ByComp><span>By Comp</span><Chevron viewBox="0 0 8 5"><path d="M1 1l3 3 3-3" fill="none" stroke="#444" strokeWidth="1.200" /></Chevron></ByComp>],
  ['meshCube', 142], ['drop', 155], ['solidCube', 168], ['drop', 181], ['twoCubes', 195], ['mirror', 215], ['greens', 234], ['grip', 250], ['bars', 260], ['barsOutline', 282], ['diamond', 301], ['cubeWire', 320], ['curved', 341], ['dropCube', 360], ['barsVx', 380], ['ribbons', 399], ['dish', 418], ['infoDoc', 437], ['triadMag', 458], ['crossMove', 477], ['grip', 492], ['curveX', 506], ['speech', 525], ['mountain', 545], ['camGray', 563], ['chartCalc', 579],
];
const BT2 = [
  ['grip', 6], ['discUp', 18], ['drop', 32], ['discFirst', 46], ['discPrev', 66], ['discPlay', 85], ['discNext', 105], ['discLast', 124],
  ['slider', 193, 118, <SliderWrap><SliderTop><Thumb $w={21} /></SliderTop><SliderBottom><Thumb $w={7} /></SliderBottom></SliderWrap>], ['discGear', 263],
];

const LEGEND = ['7.252E-03', '-2.644E-01', '-5.361E-01', '-8.078E-01', '-1.080E+00', '-1.351E+00', '-1.623E+00', '-1.895E+00', '-2.166E+00', '-2.438E+00'];
const LEGEND_C = ['#ff0000', '#ff7a00', '#ffd800', '#b4e800', '#28e400', '#20f0a0', '#00c8e0', '#1878ff', '#0000c4'];
const MENUS = [['File', 9.5], ['Edit', 9.5], ['View', 10.5], ['Model', 9.5], ['Results', 10.5], ['Annotations', 9.5], ['Tools', 10.5], ['Preferences', 8.5], ['Applications', 9.5], ['Help', 0]];
const TREE = [
  ['folderPlate', 'Components (2)'], ['folder', 'Load Cases'], ['folderNotes', 'Notes (1)'], ['folderStyle', 'Plot Styles (3)'], ['folder', 'Results'], ['folderSets', 'Sets  (1)'], ['folderViews', 'Views (1)'], ['folderMeasures', 'Measures (2)'],
];

function ComboBox({ text, w, h, mt, ml, off }) {
  return (
    <Combo $w={w} $h={h} $mt={mt} $ml={ml} $off={off}>
      <ComboText>{text}</ComboText>
      <ComboArrow><DropTri $c={off ? '#888' : '#222'} /></ComboArrow>
    </Combo>
  );
}

const ToFirst = ({ c = '#111' }) => <ToEnd><Glyph $s={7} viewBox="0 0 7 7"><path d="M1 0v7" stroke={c} strokeWidth="1.500" /><path d="M6 0v7L2 3.500z" fill={c} /></Glyph></ToEnd>;
const SelChevron = () => <Chevron viewBox="0 0 8 5"><path d="M1 1l3 3 3-3" fill="none" stroke="#555" strokeWidth="1.200" /></Chevron>;

function ModelScene() {
  return (
    <Scene viewBox="273 93 719 327" preserveAspectRatio="none">
      <defs>
        <linearGradient id="topFace" x1="0" y1="0" x2="1" y2="1"><stop offset="0" stopColor="#880000" /><stop offset="1" stopColor="#7c0000" /></linearGradient>
        <linearGradient id="strip" x1="0.7" y1="0" x2="0.3" y2="1">
          <stop offset="0" stopColor="#a89c00" /><stop offset=".19" stopColor="#a09400" /><stop offset=".2" stopColor="#5c8c00" /><stop offset=".85" stopColor="#5c8c00" /><stop offset=".86" stopColor="#a8a000" /><stop offset="1" stopColor="#aca400" />
        </linearGradient>
        <linearGradient id="blob" x1="0" y1="0" x2="0" y2="1"><stop offset="0" stopColor="#a05000" /><stop offset=".6" stopColor="#a05204" /><stop offset="1" stopColor="#ae7200" /></linearGradient>
        <linearGradient id="cap" x1="0" y1="0" x2="0" y2="1"><stop offset="0" stopColor="#c04800" /><stop offset=".5" stopColor="#f09000" /><stop offset="1" stopColor="#f0e000" /></linearGradient>
        <filter id="soft" x="-40%" y="-60%" width="180%" height="220%"><feGaussianBlur stdDeviation="8" /></filter>
      </defs>
      <g transform="translate(360 110) scale(.33333)">
        <path d="M216 48L1330 107 1162 645 45 590z" fill="url(#topFace)" />
        <path d="M216 48L1330 107" stroke="#f00000" strokeWidth="2" fill="none" />
        <path d="M1330 107L1322 375 1155 910 1162 645z" fill="#3e0000" />
        <path d="M45 590L1162 645 1155 910 40 852z" fill="#ff0000" />
        <ellipse cx="740" cy="170" rx="60" ry="12" fill="#b80000" filter="url(#soft)" />
        <ellipse cx="630" cy="550" rx="90" ry="10" fill="#560000" filter="url(#soft)" />
        <path d="M690 172C720 168 780 172 795 178 820 190 828 215 822 245L745 495C725 535 700 550 680 550L595 550C565 548 550 525 553 490 560 440 590 330 625 240 640 200 660 178 690 172Z" fill="url(#blob)" />
        <path d="M695 172C720 170 775 172 792 180L785 196 705 196Z" fill="url(#cap)" />
        <path d="M694 200L704 196 595 540 590 550Z" fill="#8d9400" />
        <path d="M785 196L796 200 690 545 680 550Z" fill="#6a6c00" />
        <path d="M705 195L785 195 680 550 592 550Z" fill="url(#strip)" />
        <path d="M705 195L594 548M785 195L682 548" stroke="#4a5c00" strokeWidth="3" strokeDasharray="6 3" fill="none" />
      </g>
      <path d="M283 408V385" stroke="#1616d8" strokeWidth="1.500" />
      <path d="M280 392l3-11 3 11z" fill="#1616d8" />
      <path d="M283 408H306" stroke="#d82020" strokeWidth="1.200" />
      <path d="M300 406l12 3-12 3z" fill="#d81818" />
      <path d="M283 402h5M283 399v6" stroke="#10d020" strokeWidth="1.400" />
      <text x="282" y="376" fontSize="10" fill="#e6e6e6" fontFamily="Liberation Sans">Z</text>
      <text x="286" y="398" fontSize="10" fill="#e6e6e6" fontFamily="Liberation Sans">Y</text>
      <text x="317" y="411" fontSize="10" fill="#e6e6e6" fontFamily="Liberation Sans">X</text>
    </Scene>
  );
}

export default function App() {
  return (
    <Page>
      <Global />
      <TitleBar>
        <TitleLogo viewBox="0 0 13 13"><path d="M6.500 1L12 11H1z" fill="none" stroke="#dfeaf5" strokeWidth="1.500" /><path d="M6.500 1L4 5.500" stroke="#e05050" strokeWidth="1.500" /><path d="M1 11h5" stroke="#3a8ed8" strokeWidth="1.500" /><path d="M12 11L9.500 6.500" stroke="#e8c040" strokeWidth="1.500" /></TitleLogo>
        <span>modello9.1.mvw - HyperWorks v14.0</span>
        <WinControls>
          <WinBtn $w={14}><MinGlyph /></WinBtn>
          <WinBtn $w={14} $ml={5}><RestGlyph /></WinBtn>
          <WinBtn $w={28} $ml={2} $close>×</WinBtn>
        </WinControls>
      </TitleBar>
      <MenuBar>{MENUS.map(([m, g]) => <MenuItem key={m} $gap={g}>{m}</MenuItem>)}</MenuBar>
      <Strip items={TB1} h={21} />
      <Strip items={TB2} h={22} size={15} />
      <Main>
        <LeftCol>
          <TabRow>
            <SideTab>Session</SideTab>
            <SideTab $on>Results<TabX>×</TabX></SideTab>
          </TabRow>
          <SideFrame>
            <IconBand>
              <Strip items={TOP_ICONS} h={18} size={15} />
            </IconBand>
            <Header $h={20}>
              <HeadCell $w={38} $sort>Files</HeadCell>
              <HeadCell $w={11} $center>ID</HeadCell>
              <HeadCell $w={15} $center><Icon k="wheel" s={11} /></HeadCell>
              <HeadCell $w={15} $center><Icon k="plateBar" s={13} /></HeadCell>
            </Header>
            <RuledList $h={42}>
              <FileRow>
                <IndentBox $w={13} /><Glyph $s={12} viewBox="0 0 12 9"><Model y={1} /></Glyph>
                <Num $w={8} $ml={5}>1</Num><Num $w={6} $ml={3}>1</Num><Swatch $c="#ff0000" $ml={2} $mr={5} />
                <Glyph $s={11} viewBox="0 0 18 18"><Plate /></Glyph>
              </FileRow>
            </RuledList>
            <Splitter $h={6}><Tri /></Splitter>
            <SelRow $mt={1}>
              <Spin><SpinBtn><SpinUp /></SpinBtn><SpinBtn><DropTri /></SpinBtn></Spin>
              <SideSelect>Subcase 1 (loadstep1)<SelChevron /></SideSelect>
            </SelRow>
            <SelRow $mt={4}>
              <Spin><SpinBtn><SpinUp /></SpinBtn><SpinBtn><DropTri /></SpinBtn></Spin>
              <SideSelect>Static Analysis<SelChevron /></SideSelect>
            </SelRow>
            <Strip items={MID_ICONS} h={24} />
            <Header $h={16}>
              <HeadCell $w={118} $sort>Entities</HeadCell>
              <HeadCell $w={14} $center><Icon k="info" s={12} /></HeadCell>
              <HeadCell $w={11} $center>ID</HeadCell>
              <HeadCell $w={14} $center><Icon k="wheel" s={11} /></HeadCell>
              <HeadCell $w={14} $center><Icon k="cube" s={12} /></HeadCell>
            </Header>
            <RuledList>
              <TreeRow>
                <Expander>−</Expander><IndentBox $w={3} /><Glyph $s={12} viewBox="0 0 18 18"><Folder /><Model x={6} y={8} /></Glyph>
                <TreeLabel $ml={6}>Assembly Hierarchy</TreeLabel>
              </TreeRow>
              <TreeRow>
                <TreeLink /><IndentBox $w={26} /><Icon k="meshDark" s={11} /><TreeLabel $ml={6}>3D_mesh_piano</TreeLabel>
                <IdCell>2</IdCell><Swatch $c="#0000ff" /><IndentBox $w={4} /><Icon k="cube" s={12} /><IndentBox $w={63} />
              </TreeRow>
              <TreeRow>
                <TreeLink /><IndentBox $w={26} /><Icon k="meshLight" s={11} /><TreeLabel $ml={6}>3D_semicilindro_mesh</TreeLabel>
                <IdCell>4</IdCell><Swatch $c="#ffff00" /><IndentBox $w={4} /><Icon k="cube" s={12} /><IndentBox $w={63} />
              </TreeRow>
              {TREE.map(([k, t]) => (
                <TreeRow key={t}>
                  <Expander>+</Expander><IndentBox $w={3} /><Icon k={k} s={12} /><TreeLabel $ml={5}>{t}</TreeLabel>
                </TreeRow>
              ))}
            </RuledList>
            <Splitter $h={5}><Tri /></Splitter>
            <Header $h={15}>
              <HeadCell $w={25}>Name</HeadCell>
              <HeadCell $w={100}>Value</HeadCell>
            </Header>
            <RuledList $h={99} />
          </SideFrame>
        </LeftCol>
        <RightCol>
          <RightHead><span>Analysis Results</span><span>1 of 1</span></RightHead>
          <ViewRow>
            <SideTools>
              <Strip column items={VTOOLS} />
            </SideTools>
            <Viewport>
              <ModelScene />
              <LegendText>
                <LegendLine>Contour Plot</LegendLine>
                <LegendLine>Displacement(Z)</LegendLine>
                <LegendLine>Analysis system</LegendLine>
              </LegendText>
              <ScaleBox>
                {LEGEND.map((t, i) => (
                  <ScaleRow key={t}>
                    {LEGEND_C[i] && <ScaleColor $c={LEGEND_C[i]} />}
                    <ScaleTick />
                    <ScaleLabel>{t}</ScaleLabel>
                  </ScaleRow>
                ))}
              </ScaleBox>
              <LegendFoot>
                <NoResult><NoSwatch />No result</NoResult>
                <LegendLine>Max = 7.252E-03</LegendLine>
                <LegendLine>Grids 91731</LegendLine>
                <LegendLine>Min = -2.438E+00</LegendLine>
                <LegendLine>Grids 108586</LegendLine>
              </LegendFoot>
              <TopRight>1: 1<br />Subcase 1 (loadstep1) : Static Analysis : Frame 4</TopRight>
            </Viewport>
          </ViewRow>
          <ToolArea>
            <Strip items={BT1} h={20} origin={1} />
            <Strip items={BT2} h={22} origin={1} />
          </ToolArea>
          <Panel>
            <Col $w={138}>
              <SpacedRow>
                <Label>Result type:</Label>
                <RaisedBtn $w={11} $h={11}>...</RaisedBtn>
              </SpacedRow>
              <ComboBox text="Displacement (v)" w={120} mt={2} ml={4} />
              <ComboBox text="Z" w={120} mt={4} ml={4} />
              <Row $mt={5} $ml={5}>
                <Label>Layers:</Label>
                <ComboBox text="" w={50} ml={11} off />
                <IndentBox $w={4} />
                <Glyph $s={14} viewBox="0 0 18 18"><path d="M1 3h16l-6 7v6H7v-6z" fill="#dce4ee" stroke="#56708c" strokeWidth="1.400" /></Glyph>
                <IndentBox $w={2} />
                <DropTri $c="#bbb" />
                <IndentBox $w={3} />
                <Glyph $s={16} viewBox="0 0 18 18"><path d="M9 10l8 3-8 4-8-4z" fill="#b0c4a0" /><path d="M9 6l8 3-8 4-8-4z" fill="#a8b8c8" /><path d="M9 2l8 3-8 4-8-4z" fill="#c4b8d4" /></Glyph>
              </Row>
              <Row $mt={9} $ml={5}><Check /><Label $off>Use corner data</Label></Row>
            </Col>
            <Col $w={112} $ml={7}>
              <Label>Selection:</Label>
              <Row $mt={1} $ml={4}>
                <RaisedBtn $w={16} $h={15}><DropTri /></RaisedBtn>
                <RaisedBtn $w={76} $h={15} $bg="#dede58" $hot>Components</RaisedBtn>
                <RaisedBtn $w={16} $h={15}><ToFirst /></RaisedBtn>
              </Row>
              <Label $mt={8}>Resolved in:</Label>
              <ComboBox text="Analysis System" w={105} mt={1} ml={6} />
              <Row $mt={4} $ml={6}>
                <RaisedBtn $w={91} $h={15} $bg="#e2e260" $off>System</RaisedBtn>
                <RaisedBtn $w={15} $h={15}><ToFirst c="#999" /></RaisedBtn>
              </Row>
              <Row $mt={4} $ml={7}><Check /><Label $off>Use tracking system</Label></Row>
            </Col>
            <Col $w={95} $ml={8}>
              <Label>Averaging method:</Label>
              <ComboBox text="None" w={89} h={15} mt={1} ml={5} off />
              <Row $mt={4} $ml={5}>
                <Check /><Label $off>Variation &lt;</Label>
                <Sunken $w={21} $h={16} $ml={5}>10</Sunken>
                <Label $off $ml={5}>[%]</Label>
              </Row>
              <RaisedBtn $w={76} $h={15} $mt={4} $ml={18} $off>Averaging Options...</RaisedBtn>
              <Label $mt={3}>Envelope trace plot:</Label>
              <ComboBox text="None" w={89} h={15} mt={2} ml={5} off />
            </Col>
            <Col $w={56} $ml={6}>
              <Label>Value filter:</Label>
              <ComboBox text="None" w={44} mt={3} ml={2} />
              <Sunken $w={38} $h={15} $mt={4} $ml={2} />
              <Sunken $w={38} $h={15} $mt={1} $ml={2} />
              <RaisedBtn $w={53} $h={15} $mt={8} $ml={2}>Cache</RaisedBtn>
              <RaisedBtn $w={53} $h={16} $mt={1} $ml={2}>Apply</RaisedBtn>
            </Col>
            <VRule />
            <Col $w={112} $ml={3}>
              <TabStrip>
                <PanelTab $w={29}>Display</PanelTab>
                <PanelTab $w={30}>Legend</PanelTab>
                <PanelTab $w={28} $on>Result</PanelTab>
              </TabStrip>
              <TabBody>
                <Row $ml={2}><Check $on $mr={4} /><Label>Overlay result display</Label></Row>
                <RaisedBtn $w={75} $h={12} $mt={3}>Clear Contour</RaisedBtn>
                <RaisedBtn $w={75} $h={12} $mt={2}>Create Plot Style...</RaisedBtn>
                <RaisedBtn $w={75} $h={12} $mt={2}>Show Iso Value</RaisedBtn>
                <RaisedBtn $w={75} $h={12} $mt={2} $off>Projection Rule...</RaisedBtn>
                <RaisedBtn $w={75} $h={12} $mt={2}>Query Results...</RaisedBtn>
              </TabBody>
            </Col>
          </Panel>
        </RightCol>
      </Main>
      <Status>Ready</Status>
      <Taskbar>
        <TaskBlock $ml={12} $w={8} $c="#e8f4fa" />
        <TaskBlock $ml={30} $w={10} $c="#e8c860" />
        <TaskBlock $ml={9} $w={34} $c="#55a8d4" />
        <TaskBlock $ml={-21} $w={10} $c="#d84030" />
        <TaskBlock $ml={12} $w={3} $c="#235060" $skew />
        <TaskBlock $ml={8} $w={14} $c="#e8d488" />
        <TaskBlock $ml={57} $w={21} $c="#109030" />
        <TaskBlock $ml={46} $w={36} $c="#55a8d4" />
        <TaskBlock $ml={1} $w={35} $c="#55a8d4" />
        <TaskBlock $ml={20} $w={5} $c="#235060" $skew />
        <TaskBlock $ml={307} $w={8} $c="#235060" $skew />
        <TaskNotes />
      </Taskbar>
    </Page>
  );
}
